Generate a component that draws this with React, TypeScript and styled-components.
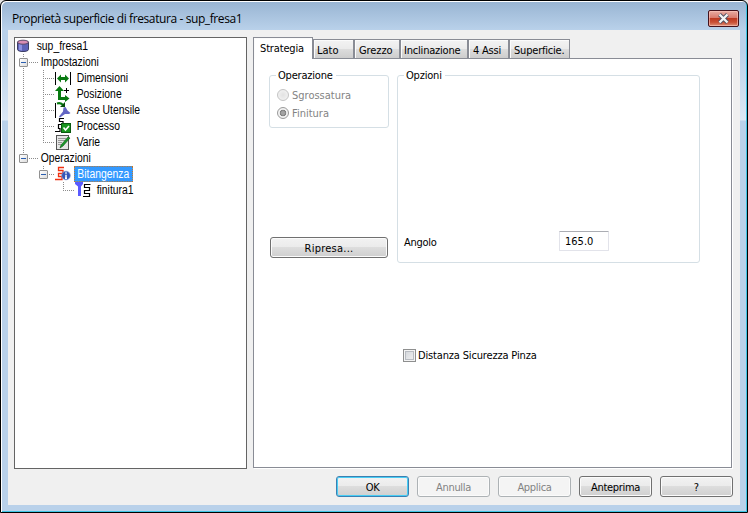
import React from 'react';
import styled, { createGlobalStyle, css } from 'styled-components';

const GlobalStyle = createGlobalStyle`
  * {
    box-sizing: border-box;
  }

  body {
    margin: 0;
    background: #e4e4e4;
    overflow: hidden;
  }
`;

const uiFont = css`
  font-family: 'DejaVu Sans Condensed', 'DejaVu Sans', sans-serif;
  font-stretch: condensed;
  font-size: 11px;
`;

const Window = styled.div`
  display: flex;
  flex-direction: column;
  width: 748px;
  height: 513px;
  padding: 1px 6px 6px;
  border: 1px solid #000;
  border-radius: 6px 6px 0 0;
  background:
    linear-gradient(#98b4d2, #b9d1ea 29px, #b9d1ea 50px, #dce8f5 119px, #b9d1ea 120px);
  box-shadow: inset 1px 1px 0 #fff, inset -1px -1px 0 #3fc4e4;
`;

const TitleBar = styled.header`
  display: flex;
  flex: none;
  align-items: flex-start;
  justify-content: space-between;
  height: 28px;
  padding: 8px 2px 0 5px;
  font-family: 'Open Sans', sans-serif;
  font-size: 12px;
  line-height: 18px;
  letter-spacing: -0.4px;
  color: #000;
`;

const CloseButton = styled.button`
  display: flex;
  align-items: center;
  justify-content: center;
  width: 31px;
  height: 17px;
  padding: 0;
  border: 1px solid #43121c;
  border-radius: 2px;
  background: linear-gradient(#e8aca3, #d9786a 48%, #bd3a22 50%, #c94f35 75%, #dd9078);
  box-shadow: inset 0 0 0 1px rgba(255, 200, 190, 0.6);
`;

const Client = styled.main`
  display: flex;
  flex: 1;
  flex-direction: column;
  margin: 0 1px 1px;
  padding: 7px 7px 0 6px;
  background: #f0f0f0;
`;

const Columns = styled.div`
  display: flex;
  gap: 6px;
  height: 432px;
`;

const Tree = styled.div`
  flex: none;
  width: 233px;
  border: 1px solid #646464;
  background: #fff;
  font-family: 'Liberation Sans', sans-serif;
  font-size: 12.5px;
  line-height: 16px;
  color: #000;
`;

const Row = styled.div`
  display: flex;
  align-items: center;
  height: 16px;
`;

type Vertical = 'none' | 'full' | 'top' | 'bottom';

const verticalLine = {
  none: '8px 0 / 1px 0',
  full: '8px 0 / 1px 16px',
  top: '8px 0 / 1px 9px',
  bottom: '8px 8px / 1px 8px',
};

const Guide = styled.span<{ $line?: Vertical; $branch?: boolean; $wide?: boolean }>`
  display: flex;
  flex: none;
  align-items: center;
  width: ${(props) => (props.$wide ? 24 : 20)}px;
  height: 16px;
  padding-left: 4px;
  background:
    repeating-linear-gradient(#8c8c8c 0 1px, transparent 1px 2px)
      ${(props) => verticalLine[props.$line || 'none']} no-repeat,
    repeating-linear-gradient(90deg, #8c8c8c 0 1px, transparent 1px 2px)
      8px 8px / ${(props) => (props.$branch ? 16 : 0)}px 1px no-repeat;
`;

const Expander = styled.span`
  display: flex;
  align-items: center;
  justify-content: center;
  width: 9px;
  height: 9px;
  margin-top: 1px;
  border: 1px solid #919191;
  border-radius: 1px;
  background: linear-gradient(135deg, #fff, #dcdcdc);

  &::after {
    content: '';
    width: 5px;
    height: 1px;
    background: #2b5fb0;
  }
`;

/* Narrow face: the regular sans squeezed to a condensed width */
const NodeText = styled.span<{ $gap?: number; $selected?: boolean }>`
  height: 16px;
  margin-left: ${(props) => props.$gap ?? 4}px;
  padding: 0 4px 0 2px;
  transform: scaleX(0.83);
  transform-origin: left;
  white-space: nowrap;

  ${(props) =>
    props.$selected &&
    css`
      margin-left: 3px;
      padding: 0 3px;
      border: 1px dotted #d0761a;
      background: #3399ff;
      color: #fff;
      line-height: 14px;
    `}
`;

const Tabs = styled.div`
  display: flex;
  flex-direction: column;
  width: 480px;
`;

const TabStrip = styled.div`
  display: flex;
  flex: none;
  align-items: flex-end;
  height: 21px;
`;

const Tab = styled.div<{ $width: number; $active?: boolean; $pad?: number; $spacing?: number }>`
  ${uiFont}
  width: ${(props) => props.$width}px;
  height: 19px;
  padding-left: ${(props) => props.$pad ?? 3}px;
  border: 1px solid #898c95;
  border-bottom: 0;
  background: linear-gradient(#f3f3f3, #ebebeb 48%, #dddddd 50%, #cdcdcd);
  box-shadow: inset 1px 1px 0 #fbfbfb;
  line-height: 21px;
  letter-spacing: ${(props) => props.$spacing ?? 0}px;
  white-space: nowrap;

  ${(props) =>
    props.$active &&
    css`
      position: relative;
      height: 22px;
      margin-bottom: -1px;
      background: #fff;
    `}
`;

const Panel = styled.div`
  display: flex;
  flex: 1;
  gap: 8px;
  width: 479px;
  margin-bottom: 1px;
  padding: 16px 0 0 15px;
  border: 1px solid #898c95;
  background: #fff;
  box-shadow: 1px 1px 0 #fff;
`;

const LeftColumn = styled.div`
  display: flex;
  flex-direction: column;
  width: 120px;
`;

const RightColumn = styled.div`
  display: flex;
  flex-direction: column;
  width: 303px;
`;

const GroupBox = styled.fieldset<{ $height: number }>`
  ${uiFont}
  flex: none;
  height: ${(props) => props.$height}px;
  min-width: 0;
  margin: -6px 0 0;
  padding: 0 6px;
  border: 1px solid #d5dfe5;
  border-radius: 3px;
`;

const Legend = styled.legend<{ $spacing?: number }>`
  height: 13px;
  padding: 0 3px 0 2px;
  line-height: 14px;
  letter-spacing: ${(props) => props.$spacing ?? 0}px;
`;

const RadioGroup = styled.div`
  padding: 4px 0 0 1px;
`;

const RadioRow = styled.label`
  display: flex;
  align-items: center;
  gap: 3px;
  height: 18px;
  color: #838383;
`;

const Radio = styled.span<{ $checked?: boolean }>`
  width: 12px;
  height: 12px;
  border: 1px solid ${(props) => (props.$checked ? '#9a9a9a' : '#c4c4c4')};
  border-radius: 50%;
  background: ${(props) =>
    props.$checked
      ? 'radial-gradient(circle, #a4a4a4 0 1.5px, #7c7c7c 3px, #f2f2f2 3.6px)'
      : 'radial-gradient(circle, #e2e2e2, #f6f6f6)'};
`;

const Button = styled.button<{ $width: number; $primary?: boolean; $spacing?: number }>`
  ${uiFont}
  width: ${(props) => props.$width}px;
  height: 21px;
  padding: 1px 0 0;
  border: 1px solid ${(props) => (props.$primary ? '#3c7fb1' : '#707070')};
  border-radius: 3px;
  background: linear-gradient(#f2f2f2, #ebebeb 49%, #dddddd 50%, #cfcfcf);
  box-shadow: inset 0 0 0 1px ${(props) => (props.$primary ? '#48cdf4' : '#fbfbfb')};
  color: #000;
  line-height: 17px;
  letter-spacing: ${(props) => props.$spacing ?? 0}px;

  &:disabled {
    border-color: #adb2b5;
    background: #f4f4f4;
    color: #838383;
  }
`;

const Retake = styled.div`
  margin: 109px 0 0 1px;
`;

const FieldRow = styled.div`
  display: flex;
  align-items: center;
  margin-top: 149px;
`;

const FieldLabel = styled.label`
  width: 155px;
  padding-top: 2px;
  letter-spacing: -0.3px;
`;

const Field = styled.input`
  ${uiFont}
  width: 50px;
  height: 20px;
  padding: 0 5px;
  border: 1px solid #e2e3ea;
  border-top-color: #abadb3;
  border-radius: 1px;
  background: #fff;
  color: #000;
`;

const CheckRow = styled.label`
  ${uiFont}
  display: flex;
  align-items: center;
  gap: 2px;
  height: 13px;
  margin: 86px 0 0 6px;
  line-height: 15px;
  letter-spacing: -0.16px;
`;

const CheckBox = styled.span`
  width: 13px;
  height: 13px;
  border: 1px solid #8e8f8f;
  background: linear-gradient(135deg, #cfd3d8, #f4f4f4);
  box-shadow: inset 0 0 0 1px #f4f4f4, inset 0 0 0 2px #b8bcc2;
`;

const Footer = styled.footer`
  display: flex;
  justify-content: flex-end;
  gap: 8px;
  margin-top: 7px;
`;

const Icon: React.FC<{ children: React.ReactNode }> = ({ children }) => (
  <svg width="16" height="16" viewBox="0 0 16 16" style={{ flex: 'none' }}>
    {children}
  </svg>
);

const CylinderIcon = () => (
  <Icon>
    <path d="M2.500 4v7.500c0 2.700 11 2.700 11 0V4z" fill="#5f63b8" stroke="#3d3f66" />
    <path d="M4 6v6l3 .8V6.500z" fill="#8c90e0" />
    <ellipse cx="8" cy="4.200" rx="5.500" ry="2" fill="#d98cb4" stroke="#5a4868" />
  </Icon>
);

const DimensionIcon = () => (
  <Icon>
    <path d="M.5 2v13M15.500 2v13" stroke="#000" />
    <path d="M2 8.500 6 4.500V7h4V4.500l4 4-4 4V10H6v2.500z" fill="#087a10" />
  </Icon>
);

const PositionIcon = () => (
  <Icon>
    <path d="M4.500 0 0 5h3v9h7v2l4.500-3.500L10 9v2H6V5h3z" fill="#087a10" />
    <path d="M11.500 2v5M9 4.500h5" stroke="#000" />
  </Icon>
);

const AxisIcon = () => (
  <Icon>
    <path d="M.5 1v15" stroke="#000" />
    <path d="M2 1.500c3-1 5 0 6.500 2" fill="none" stroke="#087a10" strokeWidth="2" />
    <path d="M5 5h5V0z" fill="#064f0a" />
    <path d="m8.500 5.500 2-.5 2 3.500 3 2.500-1.500 1-4 0-5 3.500-1-1 4-5z" fill="#6366c4" />
  </Icon>
);

const ProcessIcon = () => (
  <Icon>
    <path
      d="M9 .5H4.500v3H8v3H3.500v4H5v3H0"
      fill="none"
      stroke="#000"
      strokeWidth="1.200"
    />
    <rect x="6.500" y="5.500" width="9" height="9" fill="#17951d" stroke="#0a5a10" />
    <path d="m8.500 9.500 2 2.500 3.500-4" fill="none" stroke="#fff" strokeWidth="1.600" />
  </Icon>
);

const NotesIcon = () => (
  <Icon>
    <rect x="1.500" y="1.500" width="12" height="14" fill="#e6e6e6" stroke="#555" />
    <path d="M3 4.500h8M3 6.500h7M3 8.500h4M3 10.500h3" stroke="#999" />
    <path d="m5 14 1-3 7-8 2 1-7 8z" fill="#1b9a2a" stroke="#0b5414" strokeWidth=".6" />
  </Icon>
);

const OperationIcon = () => (
  <Icon>
    <path
      d="M9 1.500H3.500v3H8v3H3.500v3H7v3H0"
      fill="none"
      stroke="#f03010"
      strokeWidth="1.300"
    />
    <circle cx="11" cy="9.500" r="4.300" fill="#3556b8" stroke="#8497d0" strokeWidth=".7" />
    <path d="M11 6.300v1.400M11 8.700v3.500M10 12.200h2" stroke="#fff" strokeWidth="1.500" />
  </Icon>
);

const FinishIcon = () => (
  <Icon>
    <path d="M0 0h8v2L6 4.500V14H3V4.500L0 2z" fill="#5a5aff" />
    <path
      d="M15.500 2.500h-6v3h5v3h-5v3h5v3H8"
      fill="none"
      stroke="#000"
      strokeWidth="1.200"
    />
  </Icon>
);

const settings = [
  { name: 'Dimensioni', icon: <DimensionIcon /> },
  { name: 'Posizione', icon: <PositionIcon /> },
  { name: 'Asse Utensile', icon: <AxisIcon /> },
  { name: 'Processo', icon: <ProcessIcon /> },
  { name: 'Varie', icon: <NotesIcon /> },
];

const App: React.FC = () => {
  return (
    <>
      <GlobalStyle />
      <Window>
        <TitleBar>
          <span>Proprietà superficie di fresatura - sup_fresa1</span>
          <CloseButton aria-label="Chiudi">
            <svg width="13" height="11" viewBox="0 0 13 11">
              <path d="m2.500 1.500 8 8m0-8-8 8" stroke="#4a4f63" strokeWidth="4" />
              <path d="m2.500 1.500 8 8m0-8-8 8" stroke="#f4f4f4" strokeWidth="2.400" />
            </svg>
          </CloseButton>
        </TitleBar>
        <Client>
          <Columns>
            <Tree>
              <Row>
                <CylinderIcon />
                <NodeText>sup_fresa1</NodeText>
              </Row>
              <Row>
                <Guide $line="full" $branch $wide>
                  <Expander />
                </Guide>
                <NodeText $gap={0}>Impostazioni</NodeText>
              </Row>
              {settings.map((item, i) => (
                <Row key={item.name}>
                  <Guide $line="full" />
                  <Guide $line={i === settings.length - 1 ? 'top' : 'full'} $branch />
                  {item.icon}
                  <NodeText>{item.name}</NodeText>
                </Row>
              ))}
              <Row>
                <Guide $line="top" $branch $wide>
                  <Expander />
                </Guide>
                <NodeText $gap={0}>Operazioni</NodeText>
              </Row>
              <Row>
                <Guide />
                <Guide $line="top" $branch>
                  <Expander />
                </Guide>
                <OperationIcon />
                <NodeText $selected>Bitangenza</NodeText>
              </Row>
              <Row>
                <Guide />
                <Guide />
                <Guide $line="top" $branch />
                <FinishIcon />
                <NodeText>finitura1</NodeText>
              </Row>
            </Tree>
            <Tabs>
              <TabStrip>
                <Tab $width={60} $pad={6} $spacing={-0.15} $active>
                  Strategia
                </Tab>
                <Tab $width={41}>Lato</Tab>
                <Tab $width={46} $pad={4} $spacing={-0.1}>Grezzo</Tab>
                <Tab $width={68} $spacing={-0.2}>Inclinazione</Tab>
                <Tab $width={41} $pad={4} $spacing={-0.2}>4 Assi</Tab>
                <Tab $width={61} $pad={4} $spacing={-0.2}>Superficie.</Tab>
              </TabStrip>
              <Panel>
                <LeftColumn>
                  <GroupBox $height={59}>
                    <Legend $spacing={-0.2}>Operazione</Legend>
                    <RadioGroup>
                      <RadioRow>
                        <Radio />
                        Sgrossatura
                      </RadioRow>
                      <RadioRow>
                        <Radio $checked />
                        Finitura
                      </RadioRow>
                    </RadioGroup>
                  </GroupBox>
                  <Retake>
                    <Button $width={118} $spacing={0.25}>Ripresa...</Button>
                  </Retake>
                </LeftColumn>
                <RightColumn>
                  <GroupBox $height={194}>
                    <Legend $spacing={-0.2}>Opzioni</Legend>
                    <FieldRow>
                      <FieldLabel>Angolo</FieldLabel>
                      <Field defaultValue="165.0" />
                    </FieldRow>
                  </GroupBox>
                  <CheckRow>
                    <CheckBox />
                    Distanza Sicurezza Pinza
                  </CheckRow>
                </RightColumn>
              </Panel>
            </Tabs>
          </Columns>
          <Footer>
            <Button $width={73} $spacing={-0.5} $primary>OK</Button>
            <Button $width={73} $spacing={-0.3} disabled>Annulla</Button>
            <Button $width={73} $spacing={-0.3} disabled>Applica</Button>
            <Button $width={73} $spacing={-0.3}>Anteprima</Button>
            <Button $width={73}>?</Button>
          </Footer>
        </Client>
      </Window>
    </>
  );
};

export default App;
